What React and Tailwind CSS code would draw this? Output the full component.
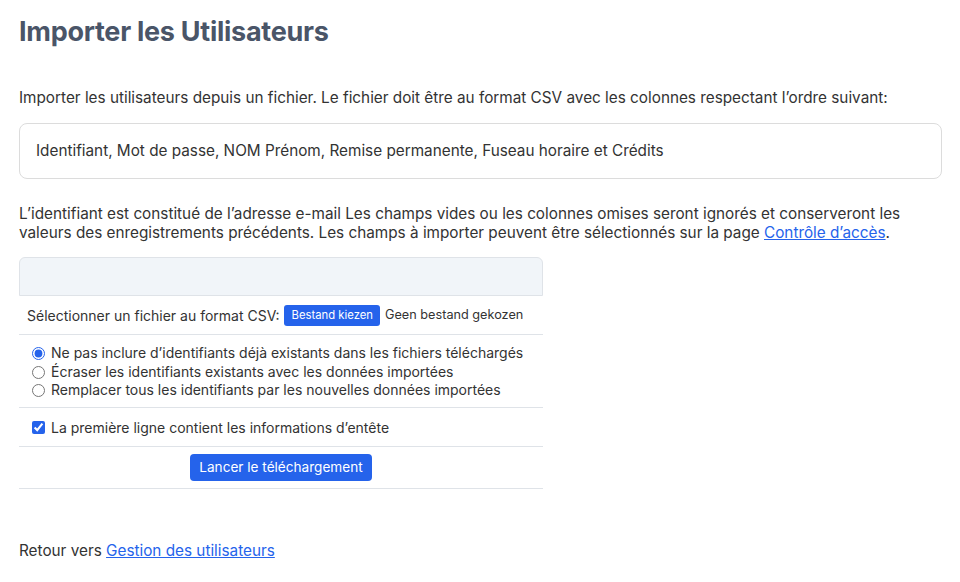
import React from "react";

export default function App() {
  return (
    <div className="min-h-screen bg-white px-[19px] pt-[14px] text-[#333] font-['Inter',sans-serif]">
      <h1 className="text-[27px] font-bold leading-[36px] text-[#4a5568] tracking-[-0.01em]">
        Importer les Utilisateurs
      </h1>

      <p className="mt-[38px] text-[15.3px] leading-[20px]">
        Importer les utilisateurs depuis un fichier. Le fichier doit être au format CSV avec les colonnes respectant l’ordre suivant:
      </p>

      <div className="mt-[15px] w-[923px] rounded-[8px] border border-[#dcdcdc] px-[16px] py-[17px] text-[15.3px] leading-[20px]">
        Identifiant, Mot de passe, NOM Prénom, Remise permanente, Fuseau horaire et Crédits
      </div>

      <p className="mt-[25px] w-[900px] text-[15.3px] leading-[19px]">
        L’identifiant est constitué de l’adresse e-mail Les champs vides ou les colonnes omises seront ignorés et conserveront les valeurs des enregistrements précédents. Les champs à importer peuvent être sélectionnés sur la page{" "}
        <a href="#" className="text-[#2563eb] underline">Contrôle d’accès</a>.
      </p>

      <div className="mt-[15px] w-[524px] text-[14px]">
        <div className="h-[39px] rounded-t-[6px] border border-[#dfe3e8] bg-[#f1f5f9]"></div>
        <div className="flex h-[39px] items-center gap-[5px] whitespace-nowrap border-b border-[#dfe3e8] px-[8px]">
          <span>Sélectionner un fichier au format CSV:</span>
          <button className="shrink-0 rounded-[3px] bg-[#2563eb] px-[7px] py-[3px] text-[11.3px] leading-[15px] text-white">
            Bestand kiezen
          </button>
          <span className="text-[12.7px]">Geen bestand gekozen</span>
        </div>
        <div className="flex flex-col border-b border-[#dfe3e8] px-[13px] pt-[9px] pb-[7px] leading-[18.7px]">
          <label className="flex items-center gap-[6px]">
            <input type="radio" name="mode" defaultChecked className="m-0 h-[13px] w-[13px] accent-[#2563eb]" />
            <span>Ne pas inclure d’identifiants déjà existants dans les fichiers téléchargés</span>
          </label>
          <label className="flex items-center gap-[6px]">
            <input type="radio" name="mode" className="m-0 h-[13px] w-[13px] accent-[#2563eb]" />
            <span>Écraser les identifiants existants avec les données importées</span>
          </label>
          <label className="flex items-center gap-[6px]">
            <input type="radio" name="mode" className="m-0 h-[13px] w-[13px] accent-[#2563eb]" />
            <span>Remplacer tous les identifiants par les nouvelles données importées</span>
          </label>
        </div>
        <div className="flex h-[39px] items-center border-b border-[#dfe3e8] px-[13px]">
          <label className="flex items-center gap-[6px]">
            <input type="checkbox" defaultChecked className="m-0 h-[13px] w-[13px] accent-[#2563eb]" />
            <span>La première ligne contient les informations d’entête</span>
          </label>
        </div>
        <div className="flex justify-center border-b border-[#dfe3e8] pt-[7px] pb-[7px]">
          <button className="h-[27px] rounded-[4px] bg-[#2563eb] px-[9px] text-[13.6px] text-white">
            Lancer le téléchargement
          </button>
        </div>
      </div>

      <p className="mt-[52px] text-[15.3px] leading-[20px]">
        Retour vers{" "}
        <a href="#" className="text-[#2563eb] underline">Gestion des utilisateurs</a>
      </p>
    </div>
  );
}
